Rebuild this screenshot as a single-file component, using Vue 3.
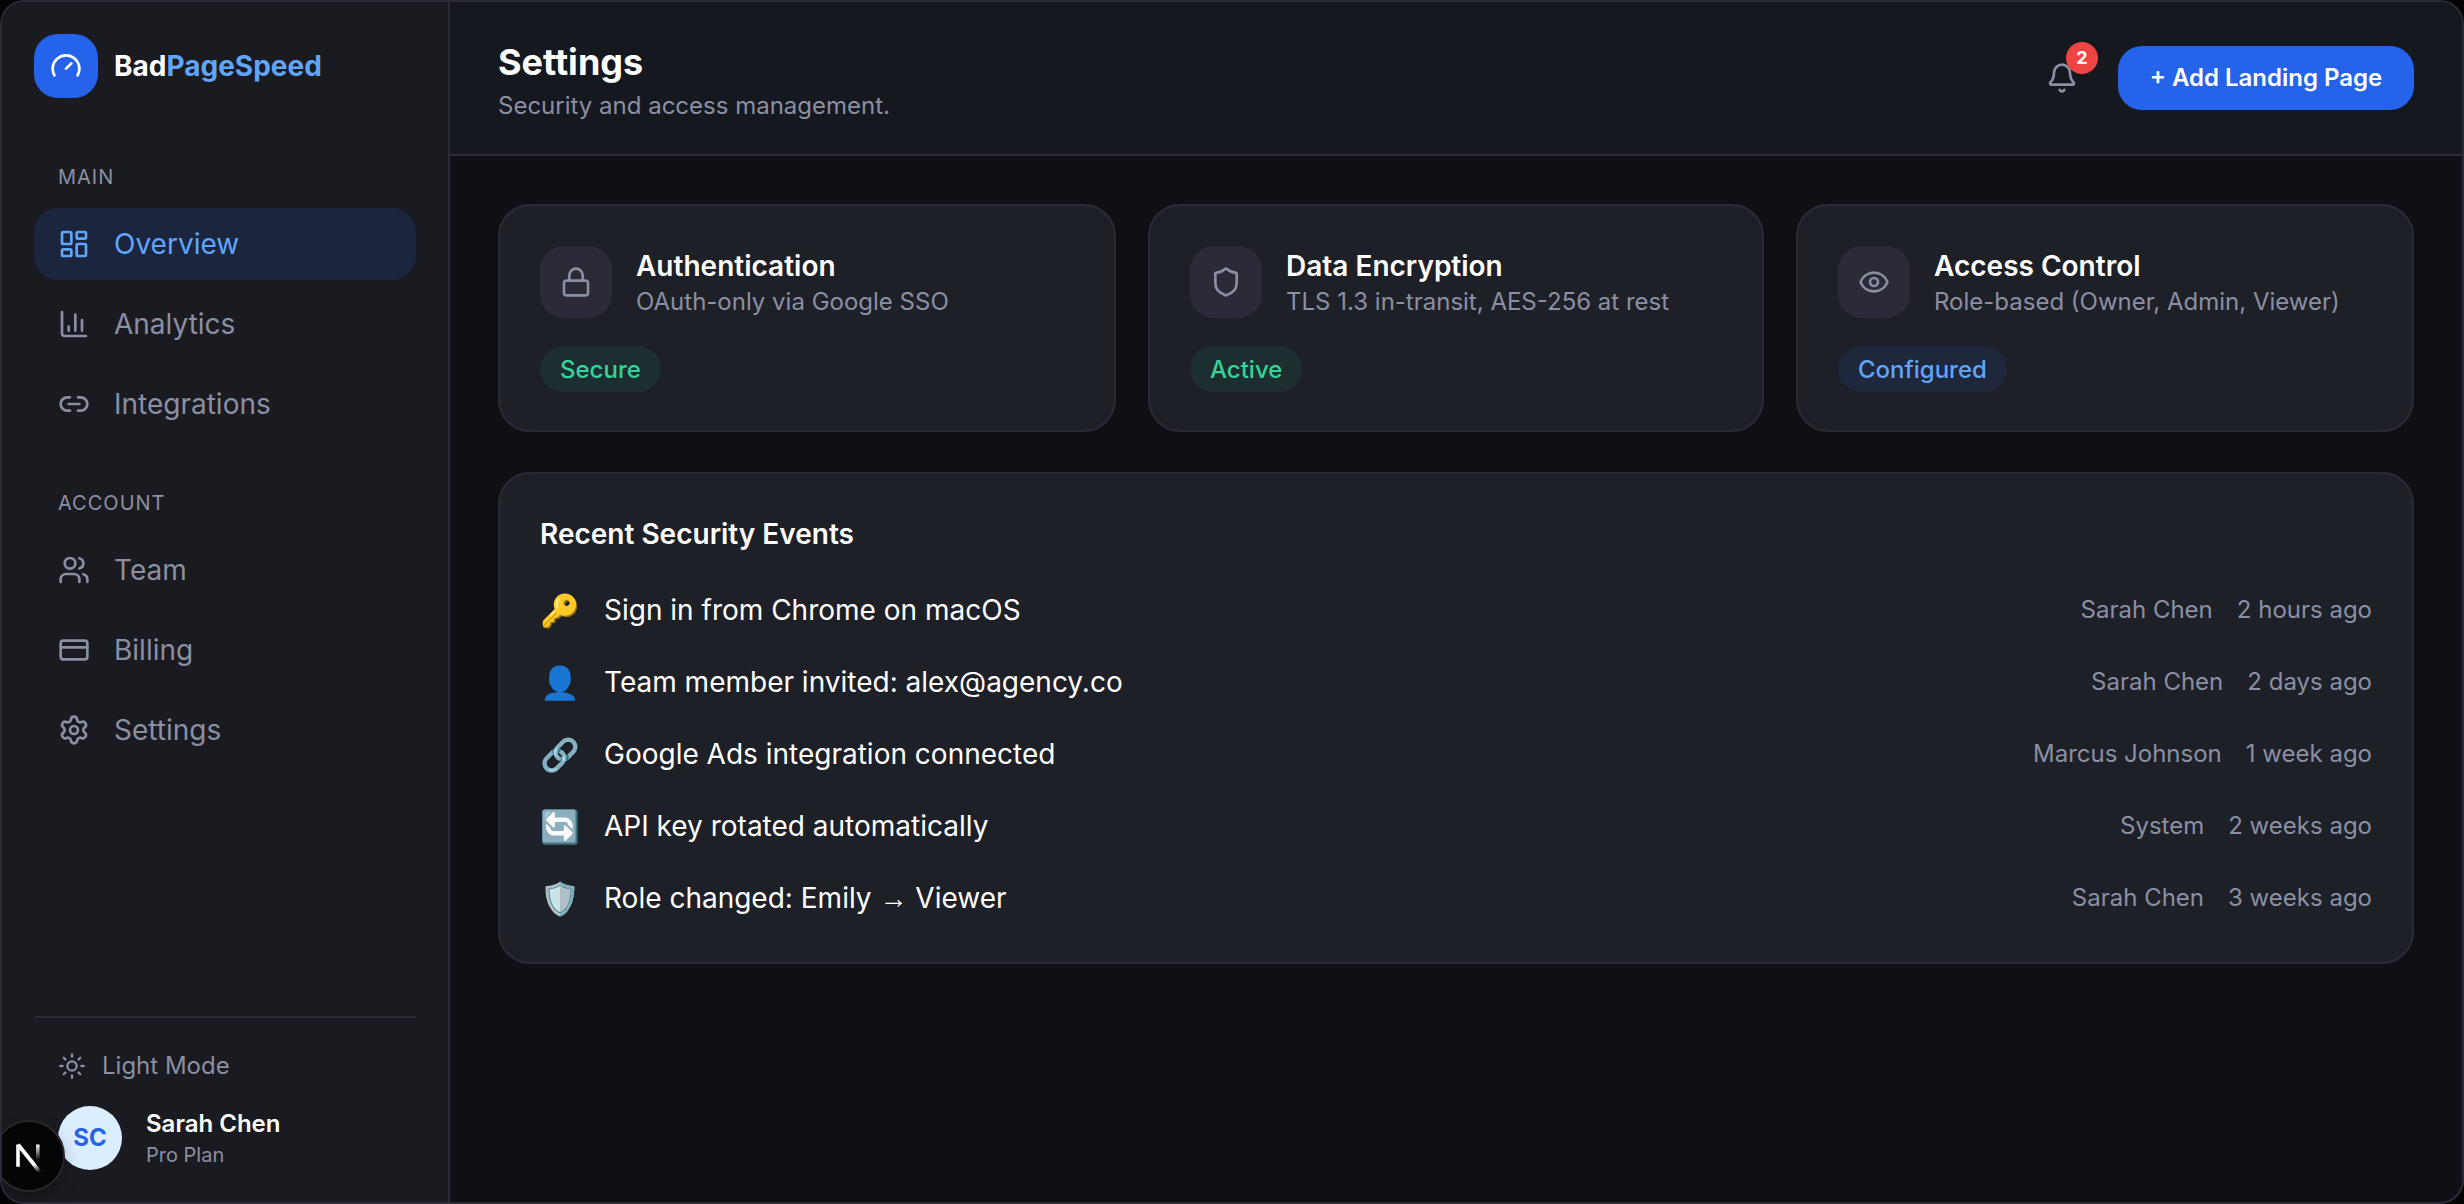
<template>
  <div class="app">
    <aside class="sidebar">
      <div class="logo">
        <div class="logo-mark">
          <svg class="icon" viewBox="0 0 24 24">
            <path d="m12 14 4-4" />
            <path d="M3.34 19a10 10 0 1 1 17.32 0" />
          </svg>
        </div>
        <div class="logo-text">Bad<span>PageSpeed</span></div>
      </div>

      <nav v-for="group in groups" :key="group.title" class="group">
        <div class="group-title">{{ group.title }}</div>
        <a v-for="item in group.items" :key="item.name" class="nav-item" :class="{ active: item.name === current }">
          <svg class="icon" viewBox="0 0 24 24">
            <path v-for="d in item.icon" :key="d" :d="d" />
          </svg>
          <span>{{ item.name }}</span>
        </a>
      </nav>

      <div class="sidebar-footer">
        <div class="theme-toggle">
          <svg class="icon" viewBox="0 0 24 24">
            <circle cx="12" cy="12" r="4" />
            <path d="M12 2v2M12 20v2M4.93 4.93l1.41 1.41M17.66 17.66l1.41 1.41M2 12h2M20 12h2M6.34 17.66l-1.41 1.41M19.07 4.93l-1.41 1.41" />
          </svg>
          <span>Light Mode</span>
        </div>
        <div class="user">
          <div class="avatar">SC</div>
          <div class="user-info">
            <div class="user-name">Sarah Chen</div>
            <div class="user-plan">Pro Plan</div>
          </div>
        </div>
      </div>
    </aside>

    <main class="main">
      <header class="header">
        <div>
          <h1>Settings</h1>
          <p>Security and access management.</p>
        </div>
        <div class="actions">
          <div class="bell">
            <svg class="icon" viewBox="0 0 24 24">
              <path d="M10.268 21a2 2 0 0 0 3.464 0" />
              <path d="M3.262 15.326A1 1 0 0 0 4 17h16a1 1 0 0 0 .74-1.673C19.41 13.956 18 12.499 18 8A6 6 0 0 0 6 8c0 4.499-1.411 5.956-2.738 7.326" />
            </svg>
            <span class="count">2</span>
          </div>
          <button>+ Add Landing Page</button>
        </div>
      </header>

      <div class="content">
        <section class="cards">
          <div v-for="card in cards" :key="card.title" class="card">
            <div class="card-head">
              <div class="card-icon">
                <svg class="icon" viewBox="0 0 24 24">
                  <path v-for="d in card.icon" :key="d" :d="d" />
                </svg>
              </div>
              <div>
                <h3>{{ card.title }}</h3>
                <p>{{ card.text }}</p>
              </div>
            </div>
            <span class="status" :class="card.color">{{ card.status }}</span>
          </div>
        </section>

        <section class="events">
          <h2>Recent Security Events</h2>
          <div v-for="event in events" :key="event.text" class="event">
            <span class="emoji">{{ event.emoji }}</span>
            <span class="event-text"><span v-for="part in event.text.split(/(→)/)" :key="part" :class="{ arrow: part === '→' }">{{ part }}</span></span>
            <span class="meta">{{ event.user }}</span>
            <span class="meta">{{ event.time }}</span>
          </div>
        </section>
      </div>
    </main>

    <div class="dev-badge">
      <svg viewBox="0 0 40 40" fill="none">
        <defs>
          <linearGradient id="diag" x1="20" y1="24" x2="31" y2="36" gradientUnits="userSpaceOnUse">
            <stop stop-color="#fff" />
            <stop offset="0.4" stop-color="#fff" />
            <stop offset="1" stop-color="#fff" stop-opacity="0" />
          </linearGradient>
          <linearGradient id="stem" x1="29" y1="8" x2="29" y2="24" gradientUnits="userSpaceOnUse">
            <stop stop-color="#fff" />
            <stop offset="1" stop-color="#fff" stop-opacity="0" />
          </linearGradient>
        </defs>
        <path d="M9 30.7V8.6" stroke="#fff" stroke-width="3.6" />
        <path d="M9.2 8.8L31 36" stroke="url(#diag)" stroke-width="3.8" />
        <path d="M28.8 8.6V24" stroke="url(#stem)" stroke-width="3.6" />
      </svg>
    </div>
  </div>
</template>

<script setup>
import { ref } from 'vue';

const current = ref('Overview');

const groups = [
  {
    title: 'MAIN',
    items: [
      {
        name: 'Overview',
        icon: [
          'M4 3h5a1 1 0 0 1 1 1v7a1 1 0 0 1-1 1H4a1 1 0 0 1-1-1V4a1 1 0 0 1 1-1z',
          'M15 3h5a1 1 0 0 1 1 1v3a1 1 0 0 1-1 1h-5a1 1 0 0 1-1-1V4a1 1 0 0 1 1-1z',
          'M15 12h5a1 1 0 0 1 1 1v7a1 1 0 0 1-1 1h-5a1 1 0 0 1-1-1v-7a1 1 0 0 1 1-1z',
          'M4 16h5a1 1 0 0 1 1 1v3a1 1 0 0 1-1 1H4a1 1 0 0 1-1-1v-3a1 1 0 0 1 1-1z',
        ],
      },
      { name: 'Analytics', icon: ['M3 3v16a2 2 0 0 0 2 2h16', 'M18 17V9', 'M13 17V5', 'M8 17v-3'] },
      { name: 'Integrations', icon: ['M9 17H7A5 5 0 0 1 7 7h2', 'M15 7h2a5 5 0 1 1 0 10h-2', 'M8 12h8'] },
    ],
  },
  {
    title: 'ACCOUNT',
    items: [
      {
        name: 'Team',
        icon: [
          'M16 21v-2a4 4 0 0 0-4-4H6a4 4 0 0 0-4 4v2',
          'M5 7a4 4 0 1 0 8 0a4 4 0 1 0-8 0',
          'M22 21v-2a4 4 0 0 0-3-3.87',
          'M16 3.13a4 4 0 0 1 0 7.75',
        ],
      },
      { name: 'Billing', icon: ['M4 5h16a2 2 0 0 1 2 2v10a2 2 0 0 1-2 2H4a2 2 0 0 1-2-2V7a2 2 0 0 1 2-2z', 'M2 10h20'] },
      {
        name: 'Settings',
        icon: [
          'M9.671 4.136a2.34 2.34 0 0 1 4.659 0 2.34 2.34 0 0 0 3.319 1.915 2.34 2.34 0 0 1 2.33 4.033 2.34 2.34 0 0 0 0 3.831 2.34 2.34 0 0 1-2.33 4.033 2.34 2.34 0 0 0-3.319 1.915 2.34 2.34 0 0 1-4.659 0 2.34 2.34 0 0 0-3.32-1.915 2.34 2.34 0 0 1-2.33-4.033 2.34 2.34 0 0 0 0-3.831A2.34 2.34 0 0 1 6.35 6.051a2.34 2.34 0 0 0 3.319-1.915',
          'M9 12a3 3 0 1 0 6 0a3 3 0 1 0-6 0',
        ],
      },
    ],
  },
];

const cards = [
  {
    title: 'Authentication',
    text: 'OAuth-only via Google SSO',
    status: 'Secure',
    color: 'green',
    icon: ['M5 11h14a2 2 0 0 1 2 2v7a2 2 0 0 1-2 2H5a2 2 0 0 1-2-2v-7a2 2 0 0 1 2-2z', 'M7 11V7a5 5 0 0 1 10 0v4'],
  },
  {
    title: 'Data Encryption',
    text: 'TLS 1.3 in-transit, AES-256 at rest',
    status: 'Active',
    color: 'green',
    icon: ['M20 13c0 5-3.5 7.5-7.66 8.95a1 1 0 0 1-.67-.01C7.5 20.5 4 18 4 13V6a1 1 0 0 1 1-1c2 0 4.5-1.2 6.24-2.72a1.17 1.17 0 0 1 1.52 0C14.51 3.81 17 5 19 5a1 1 0 0 1 1 1z'],
  },
  {
    title: 'Access Control',
    text: 'Role-based (Owner, Admin, Viewer)',
    status: 'Configured',
    color: 'blue',
    icon: [
      'M2.062 12.348a1 1 0 0 1 0-.696 10.75 10.75 0 0 1 19.876 0 1 1 0 0 1 0 .696 10.75 10.75 0 0 1-19.876 0',
      'M9 12a3 3 0 1 0 6 0a3 3 0 1 0-6 0',
    ],
  },
];

const events = [
  { emoji: '🔑', text: 'Sign in from Chrome on macOS', user: 'Sarah Chen', time: '2 hours ago' },
  { emoji: '👤', text: 'Team member invited: alex@agency.co', user: 'Sarah Chen', time: '2 days ago' },
  { emoji: '🔗', text: 'Google Ads integration connected', user: 'Marcus Johnson', time: '1 week ago' },
  { emoji: '🔄', text: 'API key rotated automatically', user: 'System', time: '2 weeks ago' },
  { emoji: '🛡️', text: 'Role changed: Emily → Viewer', user: 'Sarah Chen', time: '3 weeks ago' },
];
</script>

<style>
body {
  margin: 0;
  background: #030304;
}
</style>

<style scoped>
* {
  box-sizing: border-box;
}
.app {
  position: relative;
  display: flex;
  width: 100%;
  height: 100vh;
  overflow: hidden;
  border: 2px solid #2a2b36;
  border-radius: 24px;
  background: #0f1014;
  color: #fff;
  font-family: Inter, sans-serif;
  font-size: 28px;
  line-height: 40px;
}
.icon {
  display: block;
  flex: none;
  width: 32px;
  height: 32px;
  fill: none;
  stroke: currentColor;
  stroke-width: 2;
  stroke-linecap: round;
  stroke-linejoin: round;
}
h1, h2, h3, p {
  margin: 0;
}

/* sidebar */
.sidebar {
  display: flex;
  flex-direction: column;
  flex: none;
  width: 448px;
  padding: 32px;
  border-right: 2px solid #2a2b36;
  background: #1a1b20;
}
.logo {
  display: flex;
  align-items: center;
  gap: 16px;
  margin-bottom: 64px;
}
.logo-mark {
  display: flex;
  align-items: center;
  justify-content: center;
  width: 64px;
  height: 64px;
  border-radius: 24px;
  background: #2563eb;
}
.logo-text {
  font-weight: 700;
}
.logo-text span {
  color: #60a5fa;
}
.group {
  display: flex;
  flex-direction: column;
  gap: 8px;
  margin-bottom: 48px;
}
.group-title {
  height: 30px;
  margin-bottom: 8px;
  padding-left: 24px;
  color: #8b8fa3;
  font-size: 20px;
  line-height: 30px;
  letter-spacing: 1px;
}
.nav-item {
  display: flex;
  align-items: center;
  gap: 24px;
  height: 72px;
  padding: 0 24px;
  border-radius: 24px;
  color: #8b8fa3;
}
.nav-item.active {
  background: #1c253e;
  color: #60a5fa;
}
.sidebar-footer {
  margin-top: auto;
  border-top: 2px solid #2a2b36;
}
.theme-toggle {
  display: flex;
  align-items: center;
  gap: 16px;
  height: 64px;
  margin: 16px 0 8px;
  padding-left: 24px;
  color: #8b8fa3;
  font-size: 24px;
}
.theme-toggle .icon {
  width: 28px;
  height: 28px;
}
.user {
  display: flex;
  align-items: center;
  gap: 24px;
  padding-left: 24px;
}
.avatar {
  display: flex;
  align-items: center;
  justify-content: center;
  width: 64px;
  height: 64px;
  border-radius: 50%;
  background: #dbeeff;
  color: #2563eb;
  font-size: 24px;
  font-weight: 700;
}
.user-info {
  padding-top: 2px;
}
.user-name {
  font-size: 24px;
  font-weight: 600;
  line-height: 32px;
}
.user-plan {
  color: #8b8fa3;
  font-size: 20px;
  line-height: 30px;
}

/* header */
.main {
  flex: 1;
  min-width: 0;
}
.header {
  display: flex;
  align-items: center;
  justify-content: space-between;
  height: 154px;
  padding: 0 48px;
  border-bottom: 2px solid #2a2b36;
  background: #15181f;
}
.header h1 {
  margin-top: -1px;
  font-size: 36px;
  font-weight: 700;
  line-height: 56px;
}
.header p {
  color: #8b8fa3;
  font-size: 24px;
  line-height: 32px;
}
.actions {
  display: flex;
  align-items: center;
  gap: 24px;
}
.bell {
  position: relative;
  display: flex;
  align-items: center;
  justify-content: center;
  width: 64px;
  height: 64px;
  color: #8b8fa3;
}
.count {
  position: absolute;
  top: -4px;
  right: -4px;
  width: 32px;
  height: 32px;
  border-radius: 50%;
  background: #ef4444;
  color: #fff;
  font-size: 18px;
  font-weight: 700;
  line-height: 32px;
  text-align: center;
}
button {
  width: 296px;
  height: 64px;
  padding: 0 0 2px;
  border: none;
  border-radius: 24px;
  background: #2563eb;
  color: #fff;
  font-family: inherit;
  font-size: 24px;
  font-weight: 600;
  white-space: nowrap;
  cursor: pointer;
}

/* content */
.content {
  padding: 48px;
}
.cards {
  display: grid;
  grid-template-columns: 309fr 308fr 309fr;
  gap: 32px;
  margin-bottom: 40px;
}
.card {
  height: 228px;
  padding: 40px;
  border: 2px solid #2a2b36;
  border-radius: 32px;
  background: #1e2028;
}
.card-head {
  display: flex;
  align-items: center;
  gap: 24px;
  margin-bottom: 28px;
}
.card-icon {
  display: flex;
  align-items: center;
  justify-content: center;
  flex: none;
  width: 72px;
  height: 72px;
  border-radius: 24px;
  background: #2a2b36;
  color: #8b8fa3;
}
.card h3 {
  font-size: 28px;
  font-weight: 600;
  line-height: 40px;
}
.card p {
  color: #8b8fa3;
  font-size: 24px;
  line-height: 32px;
}
.status {
  display: block;
  width: fit-content;
  height: 46px;
  padding: 0 20px;
  border-radius: 24px;
  font-size: 24px;
  font-weight: 500;
  line-height: 48px;
}
.status.green {
  background: #1d2e30;
  color: #34d399;
}
.status.blue {
  background: #1f273d;
  color: #60a5fa;
}
.events {
  height: 492px;
  padding: 40px;
  border: 2px solid #2a2b36;
  border-radius: 32px;
  background: #1e2028;
}
.events h2 {
  margin-bottom: 20px;
  font-size: 28px;
  font-weight: 600;
}
.event {
  display: flex;
  align-items: center;
  gap: 24px;
  height: 72px;
}
.emoji {
  width: 40px;
  padding-top: 2px;
  font-size: 32px;
}
.event-text {
  flex: 1;
  white-space: pre;
}
.arrow {
  font-family: "Liberation Sans", sans-serif;
}
.meta {
  color: #8b8fa3;
  font-size: 24px;
}

/* floating dev tools button */
.dev-badge {
  position: absolute;
  left: -9px;
  bottom: 10px;
  display: flex;
  align-items: center;
  justify-content: center;
  width: 72px;
  height: 72px;
  border: 2px solid #2b2526;
  border-radius: 50%;
  background: #040506;
  box-shadow: 0 8px 16px rgba(0, 0, 0, 0.25);
}
.dev-badge svg {
  width: 40px;
  height: 40px;
}
</style>
